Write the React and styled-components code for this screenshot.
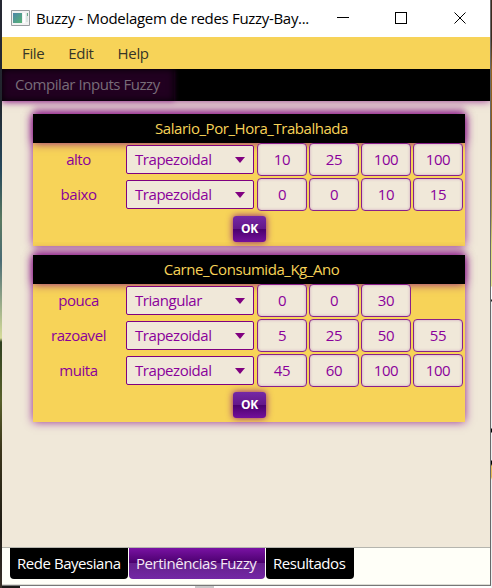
import React from "react";
import styled, { createGlobalStyle } from "styled-components";

const Global = createGlobalStyle`
  * { box-sizing: border-box; }
  body { margin: 0; background: #1b1b22; overflow: hidden; }
`;

const Desktop = styled.div`
  width: 492px;
  height: 588px;
  padding-left: 2px;
  font: 15px/20px "Open Sans", "Noto Sans", sans-serif;
  letter-spacing: -0.45px;
  display: grid;
  grid-template-columns: 489px 1px;
  grid-template-rows: 586px 2px;
  white-space: nowrap;
  background:
    linear-gradient(#252832 0 60px, #20242b 100px, #26485c 170px, #5a7960 220px, #4a6b74 260px, #d6dc99 338px, #304020 342px, #58602b 400px, #3c351b 450px, #1d1a14 530px, #393027 588px) 0 0 / 2px 100% no-repeat,
    linear-gradient(#3b2a1c 0 40px, #98641f 70px, #8a5a1b 140px, #b19c55 215px, #dcd87a 245px, #e8e890 286px, #fff 287px 299px, #222 300px 301px, #eee 302px 428px, #000 429px 432px, #eee 433px 460px, #000 461px 464px, #e8ba54 466px 477px, #eee 480px) 491px 0 / 1px 100% no-repeat;
`;
const Window = styled.div`
  width: 489px;
  height: 586px;
  display: flex;
  flex-direction: column;
  border-right: 1px solid #68686a;
  border-bottom: 1px solid #777;
  background: #f0e8d9;
`;
const Outside = styled.div`
  grid-row: 2;
  height: 2px;
  background: linear-gradient(90deg, #1b1a18 0 18px, #fff 18px 193px, #c9c9c9 193px 212px, #fff 212px);
`;
const TitleBar = styled.header`
  height: 37px;
  flex: none;
  display: flex;
  align-items: center;
  background: #fff;
  color: #000;
`;
const AppIcon = styled.svg`
  margin-left: 9px;
  width: 20px;
  height: 17px;
  flex: none;
`;
const Title = styled.div`
  width: 289px;
  padding: 0 0 2px 5px;
  flex: none;
  letter-spacing: -0.31px;
`;
const WindowButtons = styled.svg`
  width: 168px;
  height: 37px;
  flex: none;
`;
const MenuBar = styled.nav`
  height: 32px;
  flex: none;
  display: flex;
  align-items: center;
  gap: 24px;
  padding: 0 0 1px 20px;
  background: #f7d358;
  color: #363528;
  letter-spacing: -0.35px;
`;
const ToolBar = styled.div`
  height: 32px;
  flex: none;
  display: flex;
  background: #000;
  position: relative;
  box-shadow: 0 0 8px rgba(128, 0, 128, 0.8);
  clip-path: inset(0 0 -12px 0);
`;
const ToolButton = styled.div`
  width: 172px;
  height: 32px;
  padding: 5px 0 0 13px;
  color: #786c78;
  background: #210020;
  box-shadow: inset 0 0 7px #000, 0 1px 5px rgba(128, 0, 128, 0.4);
`;
const Content = styled.main`
  height: 446px;
  flex: none;
  display: flex;
  flex-direction: column;
  gap: 9px;
  padding: 13px 0 0 31px;
`;
const Panel = styled.section`
  width: 432px;
  background: #f7d358;
  box-shadow: 0 0 9px rgba(128, 0, 128, 0.8), 0 -9px 5px -1px rgba(128, 0, 128, 0.15);
`;
const PanelHeader = styled.div`
  height: 29px;
  padding: 4px 0 0 5px;
  text-align: center;
  background: #000;
  color: #f7d358;
  box-shadow: 0 0 9px rgba(128, 0, 128, 0.9);
`;
const Row = styled.div`
  height: 35px;
  display: grid;
  grid-template-columns: 91px 129px 50px 50px 50px 50px;
  column-gap: 2px;
  color: #8a009b;
`;
const Label = styled.div`
  padding: 6px 0 0;
  text-align: center;
`;
const Select = styled.div`
  width: 128px;
  height: 29px;
  margin-top: 2px;
  display: flex;
  align-items: center;
  justify-content: space-between;
  padding: 0 8px;
  border: 1px solid #800080;
  border-radius: 2px;
  background: #f0e8d9;

  span {
    padding-bottom: 2px;
  }
`;
const Field = styled.div`
  width: 50px;
  height: 33px;
  padding-top: 5px;
  text-align: center;
  border: 1px solid #8a208a;
  border-radius: 4px;
  background: #f0e8d9;
  box-shadow: inset 0 0 3px rgba(128, 0, 128, 0.3);
`;
const Footer = styled.div`
  height: 33px;
  padding: 3px 0 0 200px;
`;
const OkButton = styled.div`
  width: 33px;
  height: 26px;
  border-radius: 3px;
  background: linear-gradient(#7428a5, #64168a 49%, #4b006e 51%, #74109b);
  box-shadow: 0 0 7px rgba(128, 0, 128, 0.9);
  color: #fff;
  font: bold 12px/26px "Open Sans", sans-serif;
  letter-spacing: -0.2px;
  text-align: center;
`;
const TabBar = styled.div`
  height: 38px;
  flex: none;
  display: flex;
  gap: 1px;
  padding-left: 8px;
  border-top: 1px solid #b5b5ae;
  border-bottom: 1px solid #dcdcd4;
  background: #fffff8;
`;
const Tab = styled.div`
  width: ${(p) => p.$w}px;
  height: 31px;
  padding: 5px 0 0 7px;
  border-radius: 0 0 4px 4px;
  color: ${(p) => (p.$active ? "#f5e8f5" : "#fff")};
  background: ${(p) => (p.$active ? "linear-gradient(#7912a3, #4b006e 48%, #65208d 50%, #7428a5)" : "#000")};
`;

const panels = [
  { title: "Salario_Por_Hora_Trabalhada", rows: [
    ["alto", "Trapezoidal", [10, 25, 100, 100]],
    ["baixo", "Trapezoidal", [0, 0, 10, 15]],
  ] },
  { title: "Carne_Consumida_Kg_Ano", rows: [
    ["pouca", "Triangular", [0, 0, 30]],
    ["razoavel", "Trapezoidal", [5, 25, 50, 55]],
    ["muita", "Trapezoidal", [45, 60, 100, 100]],
  ] },
];

export default function App() {
  return (
    <Desktop>
      <Global />
      <Window>
        <TitleBar>
          <AppIcon viewBox="0 0 20 17">
            <defs>
              <linearGradient id="pane" x2="1" y2="1">
                <stop stopColor="#4d85a8" /><stop offset="1" stopColor="#57b575" />
              </linearGradient>
            </defs>
            <path d="M.5 .5h18v15H.5z" fill="#f2f2f2" stroke="#9a9da0" />
            <path d="M2 3h9v10H2z" fill="url(#pane)" />
            <path d="M12 3h2v10h-2z" fill="#fff" />
            <path d="M15 3h2v9h-2z" fill="#dce5e2" />
            <path d="M16.500 3v3" stroke="#6da989" />
          </AppIcon>
          <Title>Buzzy - Modelagem de redes Fuzzy-Bay...</Title>
          <WindowButtons viewBox="0 0 168 37" fill="none" stroke="#000" strokeWidth="1">
            <path d="M17 17.5h12M75.500 12.500h11v11h-11z" shapeRendering="crispEdges" />
            <path d="M134.500 12.500l11 11M145.500 12.500l-11 11" />
          </WindowButtons>
        </TitleBar>
        <MenuBar><span>File</span><span>Edit</span><span>Help</span></MenuBar>
        <ToolBar><ToolButton>Compilar Inputs Fuzzy</ToolButton></ToolBar>
        <Content>
          {panels.map((panel) => (
            <Panel key={panel.title}>
              <PanelHeader>{panel.title}</PanelHeader>
              {panel.rows.map(([name, shape, values]) => (
                <Row key={name}>
                  <Label>{name}</Label>
                  <Select>
                    <span>{shape}</span>
                    <svg width="10" height="6"><path d="M0 0h10L5 6z" fill="#800080" /></svg>
                  </Select>
                  {values.map((v, i) => <Field key={i}>{v}</Field>)}
                </Row>
              ))}
              <Footer><OkButton>OK</OkButton></Footer>
            </Panel>
          ))}
        </Content>
        <TabBar>
          <Tab $w={118}>Rede Bayesiana</Tab>
          <Tab $w={136} $active>Pertinências Fuzzy</Tab>
          <Tab $w={88}>Resultados</Tab>
        </TabBar>
      </Window>
      <Outside />
    </Desktop>
  );
}
